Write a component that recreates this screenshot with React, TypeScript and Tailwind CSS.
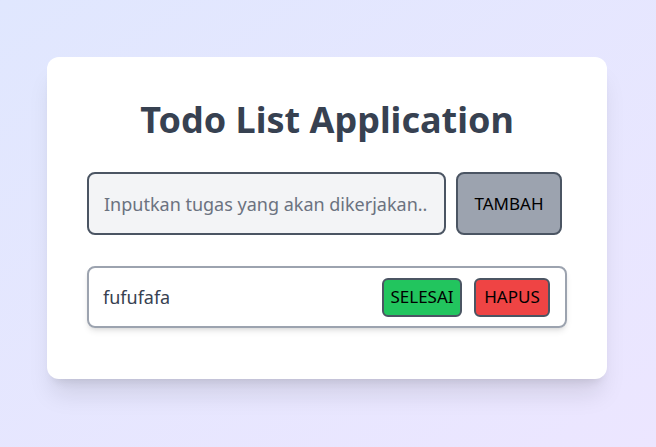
import React from "react";

export default function App() {
  return (
    <div
      className="w-[656px] h-[447px] bg-gradient-to-br from-[#e0e7fe] to-[#ece6ff] flex pl-[47px] pt-[57px]"
      style={{ fontFamily: '"Noto Sans", "Open Sans", sans-serif' }}
    >
      <div className="w-[560px] h-[322px] bg-white rounded-xl shadow-xl px-10 pt-[43px]">
        <h1 className="text-[36px] leading-[40px] font-bold text-[#374151] text-center">
          Todo List Application
        </h1>
        <div className="flex gap-[10px] mt-[32px]">
          <input
            className="w-[359px] h-[63px] bg-[#f3f4f6] border-2 border-[#4b5563] rounded-lg px-[15px] text-lg text-gray-700 placeholder:text-[#6b7280] outline-none"
            placeholder="Inputkan tugas yang akan dikerjakan.."
          />
          <button className="w-[106px] h-[63px] bg-[#9ca3af] border-2 border-[#4b5563] rounded-lg text-[17px] text-black">
            TAMBAH
          </button>
        </div>
        <div className="mt-[31px] h-[62px] border-2 border-[#9ca3af] rounded-lg shadow-md flex items-center pl-[14px] pr-[15px]">
          <span className="flex-1 text-lg text-[#374151]">fufufafa</span>
          <button className="w-[80px] h-[39px] bg-[#22c55e] border-2 border-[#4b5563] rounded-md text-[17px] text-black">
            SELESAI
          </button>
          <button className="ml-[12px] w-[76px] h-[39px] bg-[#ef4444] border-2 border-[#4b5563] rounded-md text-[17px] text-black">
            HAPUS
          </button>
        </div>
      </div>
    </div>
  );
}
